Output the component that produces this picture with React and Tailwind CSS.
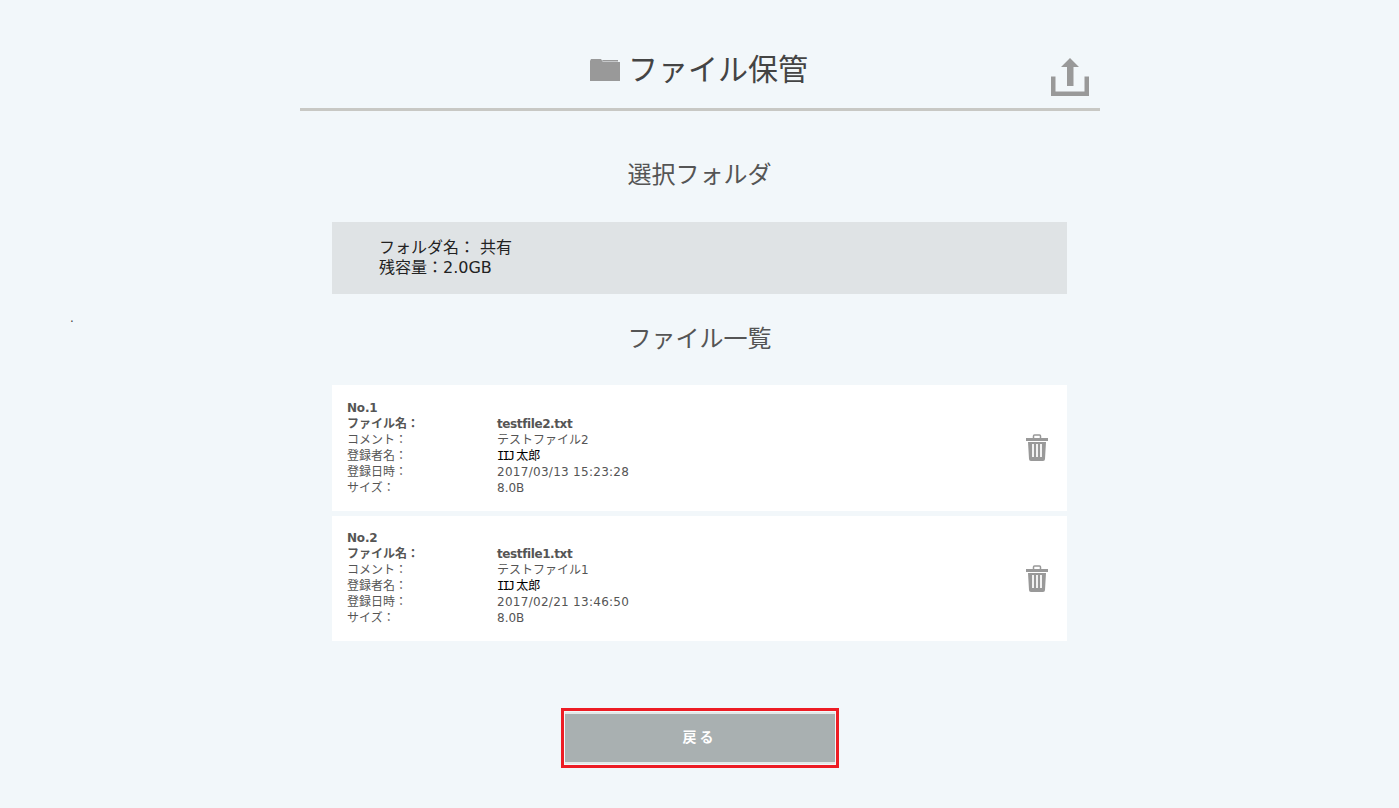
import React from 'react';

const FONT = 'font-["DejaVu_Sans","Noto_Sans_CJK_JP",sans-serif]';

const files = [
  { no: 'No.1', name: 'testfile2.txt', comment: 'テストファイル2', date: '2017/03/13 15:23:28', size: '8.0B' },
  { no: 'No.2', name: 'testfile1.txt', comment: 'テストファイル1', date: '2017/02/21 13:46:50', size: '8.0B' },
];

function FolderIcon() {
  return (
    <svg width="30" height="22" viewBox="0 0 30 22" className="shrink-0">
      <path d="M0 2 L1 0 H11 L13 3 H30 V22 H0 Z" fill="#999999" />
      <path d="M12 1 H28 V2.5 H13 Z" fill="#999999" />
    </svg>
  );
}

function UploadIcon() {
  return (
    <svg width="38" height="38" viewBox="0 0 38 38">
      <path d="M0 18.5 H4.5 V33.5 H33.5 V18.5 H38 V38 H0 Z" fill="#999999" />
      <path d="M19 0 L28 9 H22.5 V28 H16 V9 H10 Z" fill="#999999" />
    </svg>
  );
}

function TrashIcon() {
  return (
    <svg width="22" height="27" viewBox="0 0 22 27">
      <path d="M7.5 4 V2 Q7.5 1 8.5 1 H13.5 Q14.5 1 14.5 2 V4" fill="none" stroke="#999999" strokeWidth="1.5" />
      <rect x="0" y="4" width="22" height="3" fill="#999999" />
      <path d="M2 8 H20 L19 25 Q19 27 17 27 H5 Q3 27 3 25 Z" fill="#999999" />
      <rect x="6" y="10" width="2" height="13" fill="#f2f2f2" />
      <rect x="10" y="10" width="2" height="13" fill="#f2f2f2" />
      <rect x="14" y="10" width="2" height="13" fill="#f2f2f2" />
    </svg>
  );
}

function Row({ label, children, bold }) {
  return (
    <div className={`flex h-4 ${bold ? 'font-bold' : ''}`}>
      <span className="w-[150px] shrink-0">{label}</span>
      {children}
    </div>
  );
}

function FileCard({ file, className, textClass, iconClass }) {
  return (
    <div className={`flex items-start justify-between bg-white pl-[15px] pr-[19px] ${className}`}>
      <div className={`text-xs leading-4 text-[#555555] ${textClass}`}>
        <div className="h-4 font-bold tracking-[-0.2px]">{file.no}</div>
        <Row label="ファイル名：" bold>
          <span className="tracking-[-0.4px]">{file.name}</span>
        </Row>
        <Row label="コメント：">
          <span>{file.comment}</span>
        </Row>
        <Row label="登録者名：">
          <span className="text-black">
            <span className="font-['DejaVu_Sans_Mono',monospace] tracking-[-1.8px]">IIJ</span>
            <span className="ml-[3px]">太郎</span>
          </span>
        </Row>
        <Row label="登録日時：">
          <span className="tracking-[0.28px]">{file.date}</span>
        </Row>
        <Row label="サイズ：">
          <span>{file.size}</span>
        </Row>
      </div>
      <button className={`flex ${iconClass}`}>
        <TrashIcon />
      </button>
    </div>
  );
}

export default function App() {
  return (
    <div className={`relative min-h-[808px] bg-[#f2f7fa] ${FONT}`}>
      <span className="absolute left-[70px] top-[310px] text-xs text-[#444444]">.</span>
      <div className="mx-auto flex w-[800px] flex-col items-center">
        <header className="relative flex h-[111px] w-full items-start justify-center border-b-[3px] border-[#c8c8c4] pt-[48px]">
          <div className="flex items-center pr-[2px]">
            <span className="ml-px mr-2 flex">
              <FolderIcon />
            </span>
            <h1 className="text-[30px] leading-[44px] text-[#444444]">ファイル保管</h1>
          </div>
          <button className="absolute right-[11px] top-[58px] flex">
            <UploadIcon />
          </button>
        </header>
        <h2 className="mt-[46px] text-2xl leading-9 text-[#555555]">選択フォルダ</h2>
        <div className="mt-[29px] h-[72px] w-[735px] bg-[#dfe3e5] pl-[47px] pt-4 text-base leading-5 text-[#222222]">
          <div>
            フォルダ名：<span className="ml-[5px]">共有</span>
          </div>
          <div>残容量：2.0GB</div>
        </div>
        <h2 className="mt-[27px] text-2xl leading-9 text-[#555555]">ファイル一覧</h2>
        <div className="mt-[28px] flex w-[735px] flex-col gap-[5px]">
          <FileCard file={files[0]} className="h-[126px]" textClass="mt-[15px]" iconClass="mt-[49px]" />
          <FileCard file={files[1]} className="h-[125px]" textClass="mt-[14px]" iconClass="mt-[49px]" />
        </div>
        <button className="mt-[67px] box-border h-[60px] w-[278px] border-[3px] border-[#ed1c24] p-px">
          <span className="flex h-full w-full items-center justify-center border-y-2 border-[#e4e8e8] bg-[#a9b0b1] pb-[2px] text-sm font-bold tracking-[3px] text-white">
            戻る
          </span>
        </button>
      </div>
    </div>
  );
}
